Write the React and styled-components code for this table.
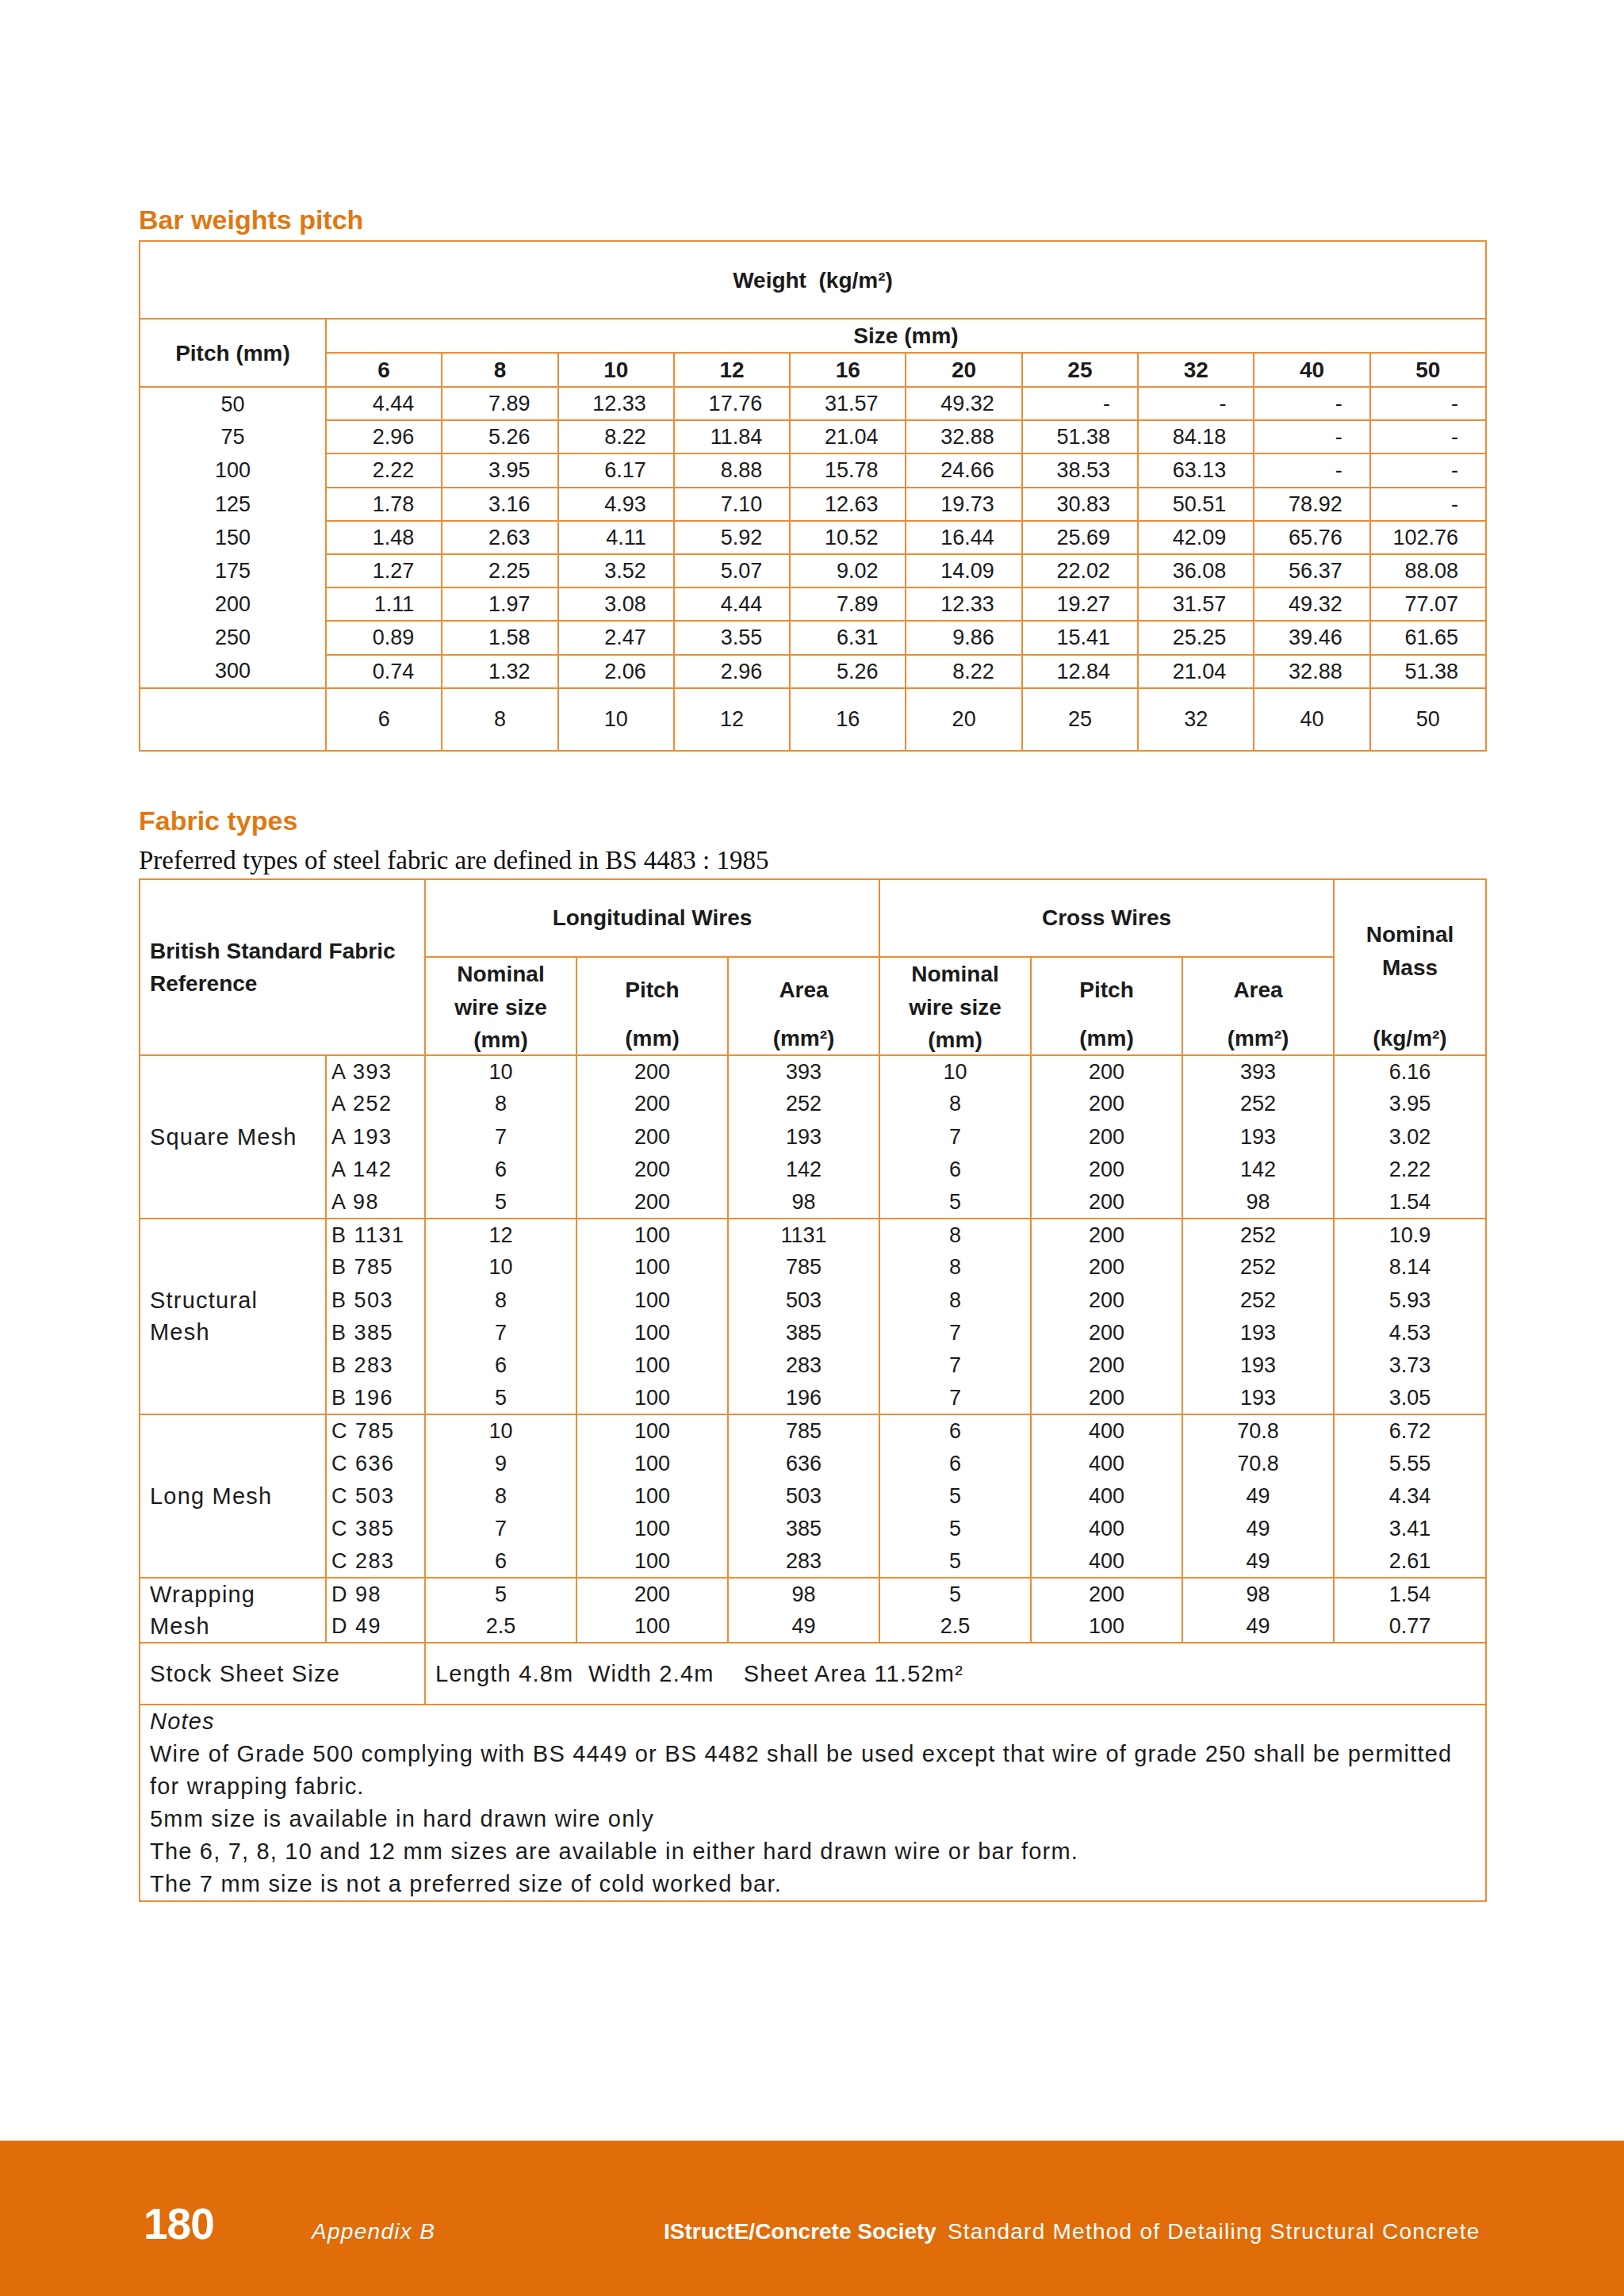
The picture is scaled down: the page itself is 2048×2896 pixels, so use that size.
import React from "react";
import styled, { createGlobalStyle } from "styled-components";

const ORANGE = "#e07812";
const LINE = "#ea8d36";
const BAND = "#e06c0a";

const GlobalStyle = createGlobalStyle`
  html, body { margin: 0; padding: 0; background: #fff; }
  body { font-family: "Liberation Sans", Arial, sans-serif; color: #1b1b1b; }
`;

const Page = styled.div`
  width: 2048px;
  min-height: 2896px;
  display: flex;
  flex-direction: column;
`;

const Main = styled.main`
  flex: 1;
  padding: 257px 175px 0 175px;
`;

const SectionTitle = styled.h2`
  margin: ${p => p.$top || 0}px 0 ${p => p.$bottom || 6}px;
  font: bold 34px/40px "Liberation Sans", Arial, sans-serif;
  color: ${ORANGE};
`;

const Lead = styled.p`
  margin: 11px 0 4px;
  font: 33px/38px "Liberation Serif", "Times New Roman", serif;
  color: #111;
`;

const Grid = styled.table`
  width: 1698px;
  border-collapse: collapse;
  table-layout: fixed;
  font-size: 27px;
  color: #1b1b1b;
`;

const Row = styled.tr`
  height: ${p => p.$h}px;
`;

// header cell, bold
const Head = styled.th`
  border: 2px solid ${LINE};
  padding: 0 0 0 ${p => p.$pl || 0}px;
  font-size: 28px;
  font-weight: bold;
  line-height: 41px;
  text-align: ${p => p.$align || "center"};
  vertical-align: middle;
  white-space: nowrap;
`;

// body cell; open edges let a group read as one block
const Cell = styled.td`
  border: 2px solid ${LINE};
  border-top-style: ${p => (p.$openTop ? "none" : "solid")};
  border-bottom-style: ${p => (p.$openBottom ? "none" : "solid")};
  padding: 0 ${p => p.$pr || 0}px 0 ${p => p.$pl || 0}px;
  text-align: ${p => p.$align || "center"};
  vertical-align: middle;
  line-height: 40px;
  white-space: nowrap;
`;

// wordy text is set wider, like the page's geometric face
const Words = styled.div`
  font-size: ${p => p.$size || 29}px;
  letter-spacing: ${p => p.$ls ?? 1.2}px;
  line-height: ${p => p.$lh || 40}px;
  font-style: ${p => (p.$italic ? "italic" : "normal")};
  white-space: pre;
`;

const Stack = styled.div`
  height: ${p => p.$h}px;
  display: flex;
  flex-direction: column;
`;

const StackTop = styled.div`
  flex: 1;
  display: flex;
  flex-direction: column;
  justify-content: center;
  line-height: 42px;
`;

const StackUnit = styled.div`
  height: 40px;
  line-height: 40px;
`;

const Footer = styled.footer`
  height: 196px;
  box-sizing: border-box;
  background: ${BAND};
  color: #fff;
  padding: 78px 0 0 181px;
  display: grid;
  grid-template-columns: 212px 444px 1fr;
  align-items: baseline;
  align-content: start;
`;

const PageNo = styled.div`
  font: bold 55px/55px "Liberation Sans", Arial, sans-serif;
  letter-spacing: -1px;
`;

const Chapter = styled.div`
  font: italic 28px/28px "Liberation Sans", Arial, sans-serif;
  letter-spacing: 1.3px;
`;

const Credit = styled.div`
  font: 28px/28px "Liberation Sans", Arial, sans-serif;
  letter-spacing: 1.25px;
  b { font-weight: bold; letter-spacing: 0; margin-right: 14px; }
`;

const sizes = [6, 8, 10, 12, 16, 20, 25, 32, 40, 50];

const weights = [
  [50, ["4.44", "7.89", "12.33", "17.76", "31.57", "49.32", "-", "-", "-", "-"]],
  [75, ["2.96", "5.26", "8.22", "11.84", "21.04", "32.88", "51.38", "84.18", "-", "-"]],
  [100, ["2.22", "3.95", "6.17", "8.88", "15.78", "24.66", "38.53", "63.13", "-", "-"]],
  [125, ["1.78", "3.16", "4.93", "7.10", "12.63", "19.73", "30.83", "50.51", "78.92", "-"]],
  [150, ["1.48", "2.63", "4.11", "5.92", "10.52", "16.44", "25.69", "42.09", "65.76", "102.76"]],
  [175, ["1.27", "2.25", "3.52", "5.07", "9.02", "14.09", "22.02", "36.08", "56.37", "88.08"]],
  [200, ["1.11", "1.97", "3.08", "4.44", "7.89", "12.33", "19.27", "31.57", "49.32", "77.07"]],
  [250, ["0.89", "1.58", "2.47", "3.55", "6.31", "9.86", "15.41", "25.25", "39.46", "61.65"]],
  [300, ["0.74", "1.32", "2.06", "2.96", "5.26", "8.22", "12.84", "21.04", "32.88", "51.38"]],
];

const fabrics = [
  {
    label: ["Square Mesh"],
    rows: [
      ["A 393", "10", "200", "393", "10", "200", "393", "6.16"],
      ["A 252", "8", "200", "252", "8", "200", "252", "3.95"],
      ["A 193", "7", "200", "193", "7", "200", "193", "3.02"],
      ["A 142", "6", "200", "142", "6", "200", "142", "2.22"],
      ["A 98", "5", "200", "98", "5", "200", "98", "1.54"],
    ],
  },
  {
    label: ["Structural", "Mesh"],
    rows: [
      ["B 1131", "12", "100", "1131", "8", "200", "252", "10.9"],
      ["B 785", "10", "100", "785", "8", "200", "252", "8.14"],
      ["B 503", "8", "100", "503", "8", "200", "252", "5.93"],
      ["B 385", "7", "100", "385", "7", "200", "193", "4.53"],
      ["B 283", "6", "100", "283", "7", "200", "193", "3.73"],
      ["B 196", "5", "100", "196", "7", "200", "193", "3.05"],
    ],
  },
  {
    label: ["Long Mesh"],
    rows: [
      ["C 785", "10", "100", "785", "6", "400", "70.8", "6.72"],
      ["C 636", "9", "100", "636", "6", "400", "70.8", "5.55"],
      ["C 503", "8", "100", "503", "5", "400", "49", "4.34"],
      ["C 385", "7", "100", "385", "5", "400", "49", "3.41"],
      ["C 283", "6", "100", "283", "5", "400", "49", "2.61"],
    ],
  },
  {
    label: ["Wrapping", "Mesh"],
    rows: [
      ["D 98", "5", "200", "98", "5", "200", "98", "1.54"],
      ["D 49", "2.5", "100", "49", "2.5", "100", "49", "0.77"],
    ],
  },
];

const wireHeads = [
  [["Nominal", "wire size"], "(mm)"],
  [["Pitch"], "(mm)"],
  [["Area"], "(mm²)"],
];

const notes = [
  "Wire of Grade 500 complying with BS 4449 or BS 4482 shall be used except that wire of grade 250 shall be permitted",
  "for wrapping fabric.",
  "5mm size is available in hard drawn wire only",
  "The 6, 7, 8, 10 and 12 mm sizes are available in either hard drawn wire or bar form.",
  "The 7 mm size is not a preferred size of cold worked bar.",
];

const BarWeights = () => (
  <Grid>
    <colgroup>
      <col style={{ width: 235 }} />
      {sizes.map(s => (
        <col key={s} style={{ width: 146.3 }} />
      ))}
    </colgroup>
    <thead>
      <Row $h={98}>
        <Head colSpan={11}>Weight&nbsp; (kg/m²)</Head>
      </Row>
      <Row $h={42}>
        <Head rowSpan={2}>Pitch (mm)</Head>
        <Head colSpan={10}>Size (mm)</Head>
      </Row>
      <Row $h={43}>
        {sizes.map(s => (
          <Head key={s}>{s}</Head>
        ))}
      </Row>
    </thead>
    <tbody>
      {weights.map(([pitch, vals]) => (
        <Row key={pitch} $h={42.2}>
          <Cell $openTop $openBottom>{pitch}</Cell>
          {vals.map((v, i) => (
            <Cell key={i} $align="right" $pr={34}>
              {v}
            </Cell>
          ))}
        </Row>
      ))}
      <Row $h={79}>
        <Cell />
        {sizes.map(s => (
          <Cell key={s}>{s}</Cell>
        ))}
      </Row>
    </tbody>
  </Grid>
);

const FabricTypes = () => (
  <Grid>
    <colgroup>
      <col style={{ width: 235 }} />
      <col style={{ width: 125 }} />
      {[0, 1, 2, 3, 4, 5].map(i => (
        <col key={i} style={{ width: 191 }} />
      ))}
      <col style={{ width: 192 }} />
    </colgroup>
    <thead>
      <Row $h={98}>
        <Head rowSpan={2} colSpan={2} $align="left" $pl={12}>
          British Standard Fabric
          <br />
          Reference
        </Head>
        <Head colSpan={3}>Longitudinal Wires</Head>
        <Head colSpan={3}>Cross Wires</Head>
        <Head rowSpan={2}>
          <Stack $h={220}>
            <StackTop>
              <span>Nominal</span>
              <span>Mass</span>
            </StackTop>
            <StackUnit>(kg/m²)</StackUnit>
          </Stack>
        </Head>
      </Row>
      <Row $h={124}>
        {[...wireHeads, ...wireHeads].map(([name, unit], i) => (
          <Head key={i}>
            <Stack $h={122}>
              <StackTop>
                {name.map(n => (
                  <span key={n}>{n}</span>
                ))}
              </StackTop>
              <StackUnit>{unit}</StackUnit>
            </Stack>
          </Head>
        ))}
      </Row>
    </thead>
    <tbody>
      {fabrics.map(group =>
        group.rows.map((r, i) => {
          const first = i === 0;
          const last = i === group.rows.length - 1;
          return (
            <Row key={r[0]} $h={41.2}>
              {first && (
                <Cell rowSpan={group.rows.length} $align="left" $pl={12}>
                  {group.label.map(l => (
                    <Words key={l}>{l}</Words>
                  ))}
                </Cell>
              )}
              {r.map((v, j) => (
                <Cell
                  key={j}
                  $openTop={!first}
                  $openBottom={!last}
                  $align={j === 0 ? "left" : "center"}
                  $pl={j === 0 ? 6 : 0}
                >
                  {j === 0 ? (
                    <Words $size={27} $ls={1.5}>
                      {v}
                    </Words>
                  ) : (
                    v
                  )}
                </Cell>
              ))}
            </Row>
          );
        })
      )}
      <Row $h={78}>
        <Cell colSpan={2} $align="left" $pl={12}>
          <Words>Stock Sheet Size</Words>
        </Cell>
        <Cell colSpan={7} $align="left" $pl={12}>
          <Words>{"Length 4.8m  Width 2.4m    Sheet Area 11.52m²"}</Words>
        </Cell>
      </Row>
      <Row $h={246}>
        <Cell colSpan={9} $align="left" $pl={12}>
          <Words $italic $lh={41}>
            Notes
          </Words>
          {notes.map(n => (
            <Words key={n} $lh={41}>
              {n}
            </Words>
          ))}
        </Cell>
      </Row>
    </tbody>
  </Grid>
);

export default function App() {
  return (
    <Page>
      <GlobalStyle />
      <Main>
        <SectionTitle>Bar weights pitch</SectionTitle>
        <BarWeights />
        <SectionTitle $top={67} $bottom={0}>
          Fabric types
        </SectionTitle>
        <Lead>Preferred types of steel fabric are defined in BS 4483 : 1985</Lead>
        <FabricTypes />
      </Main>
      <Footer>
        <PageNo>180</PageNo>
        <Chapter>Appendix B</Chapter>
        <Credit>
          <b>IStructE/Concrete Society</b>
          Standard Method of Detailing Structural Concrete
        </Credit>
      </Footer>
    </Page>
  );
}
